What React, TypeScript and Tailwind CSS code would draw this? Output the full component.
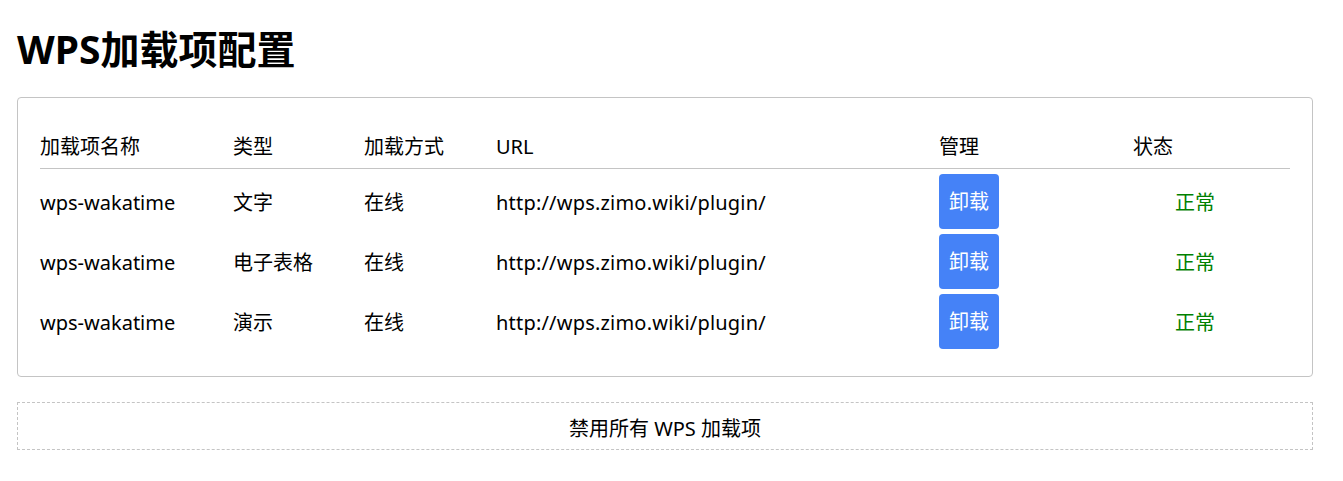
const rows = [
  { name: "wps-wakatime", type: "文字" },
  { name: "wps-wakatime", type: "电子表格" },
  { name: "wps-wakatime", type: "演示" },
];

const cols = "grid grid-cols-[193px_131px_132px_443px_194px_157px]";

export default function App() {
  return (
    <div
      className="min-h-screen bg-white pl-[17px] pr-[30px] pt-[25px] text-black"
      style={{ fontFamily: '"Noto Sans", "Noto Sans CJK SC", sans-serif' }}
    >
      <h1 className="mb-[24px] text-[39px] font-bold leading-[48px]">WPS加载项配置</h1>

      <div className="rounded-[4px] border border-[#c4c4c4] px-[22px] pb-[25px] pt-[23px]">
        <div className={`${cols} h-[48px] items-center border-b border-[#c4c4c4] text-[20px] leading-none`}>
          <span className="pt-[4px]">加载项名称</span>
          <span className="pt-[4px]">类型</span>
          <span className="pt-[4px]">加载方式</span>
          <span className="pt-[4px]">URL</span>
          <span className="pt-[4px]">管理</span>
          <span className="pt-[4px]">状态</span>
        </div>
        <div className="pt-[2px]">
          {rows.map((r, i) => (
            <div key={i} className={`${cols} h-[60px] items-center text-[20px] leading-none`}>
              <span className="pt-[4px]">{r.name}</span>
              <span className="pt-[4px]">{r.type}</span>
              <span className="pt-[4px]">在线</span>
              <span className="pt-[4px] tracking-[0.2px]">http://wps.zimo.wiki/plugin/</span>
              <span>
                <button className="h-[55px] w-[60px] rounded-[4px] bg-[#4582f7] pt-[2px] text-[20px] text-white">卸载</button>
              </span>
              <span className="pl-[42px] pt-[4px] text-[#008000]">正常</span>
            </div>
          ))}
        </div>
      </div>

      <div className="mt-[25px] flex h-[48px] items-center justify-center border border-dashed border-[#c4c4c4] pt-[6px] text-[20px] leading-none">
        禁用所有 WPS 加载项
      </div>
    </div>
  );
}
